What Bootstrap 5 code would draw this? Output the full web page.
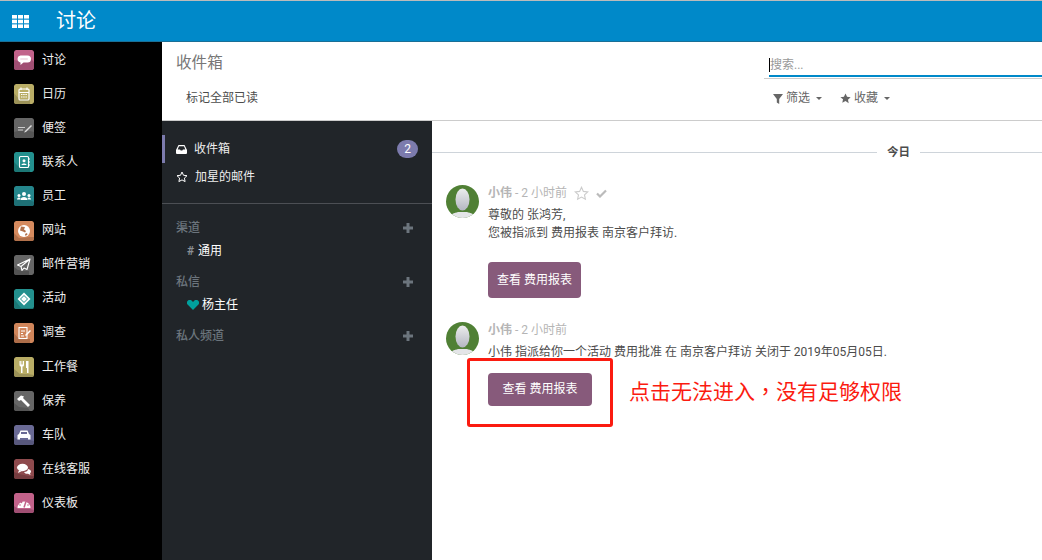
<!DOCTYPE html>
<html lang="zh">
<head>
<meta charset="utf-8">
<title>讨论</title>
<link href="https://cdn.jsdelivr.net/npm/bootstrap@5.3.0/dist/css/bootstrap.min.css" rel="stylesheet">
<style>
html,body{height:100%;overflow:hidden}
body{font-family:Roboto,"Noto Sans CJK SC",sans-serif;font-size:12px;line-height:17px;color:#4c4c4c;background:#fff}
.topbar{height:42px;background:#0089c9;border-top:1px solid #bbb;border-bottom:1px solid #1a6f96}
.grid-btn{width:40px;padding-left:12px;line-height:0}
.app-title{font-size:20px;line-height:40px;margin-left:16px;color:#fff}
.shell{height:518px}
.apps{width:162px;background:#000;padding-top:1px}
.app-row{height:34.12px;padding-left:14px;gap:8px;color:#eee;font-size:12px}
.app-ico{width:20px;height:20px;border-radius:2px;flex:none;line-height:0}
.workspace{min-width:0}
.cp{height:79px;border-bottom:1px solid #ccc;padding-left:15px}
.cp-title{font-size:15.6px;line-height:20px;margin-top:11px;margin-left:-1px;color:#777}
.cp-action{margin:17px 0 0 9px;color:#4c4c4c}
.cp-right{width:278px}
.search-box{margin-top:15px;height:22px;border-bottom:1px solid #ccc;padding-left:5px}
.search-inner{height:20px;border-bottom:2px solid #0089c9;color:#999;line-height:17px;padding-top:0}
.search-cursor{border-left:1px solid #000;padding-left:0;height:14px;display:inline-block;line-height:15px}
.filters{padding:11px 0 0 9px;color:#666;gap:18px}
.filters svg{margin-right:3px}
.caret-s{display:inline-block;border:3.5px solid transparent;border-top-color:#666;border-bottom:0;margin-left:6px;vertical-align:2px}
.side{width:270px;background:#212529;color:#eee;flex:none;padding-top:14px}
.side-item{height:28px;padding:0 14px;position:relative;gap:7px}
.side-item.on{box-shadow:inset 3px 0 0 #7c7bad}
.pill-n{background:#7c7bad;color:#fff;border-radius:9px;width:21px;height:18px;text-align:center;line-height:18px;font-size:12px;margin-left:auto}
.side-div{border-top:1px solid #4c4f54;margin-top:12px;margin-bottom:14px}
.side-h{height:20px;padding:0 14px;color:#6c757d;font-weight:500}
.side-h .plus{margin-left:auto;margin-right:5px;line-height:0}
.side-sub{height:20px;padding-left:25px;color:#fff;margin-top:3px;margin-bottom:11px;gap:3px}
.side-sub i{font-style:normal;color:#8a8f94;font-weight:700;margin-right:1px}
.main{position:relative;min-width:0}
.sep{height:18px;margin-top:22px;margin-bottom:24px;gap:10px;font-weight:700;font-size:11.5px;color:#4c4c4c}
.sep span{flex:none}
.sep b{display:block;height:1px;background:#ced4da}
.sep .l{width:445px}.sep .r{flex:1}
.msg{padding-left:14px;gap:9px}
.ava{width:33px;height:33px;flex:none;line-height:0}
.who{color:#b5b5b5;height:17px;gap:7px;margin-bottom:4px}
.who strong{font-weight:700}
.msg-line{line-height:18px}
.act-btn{background:#875a7b;color:#fff;border-radius:4px;padding:0;border:0;font-size:12px}
.b1{width:93px;height:36px;margin-top:20px}
.b2{width:104px;height:33px;margin-top:12px}
.msg-two{margin-top:24px}
.mark-box{position:absolute;left:35px;top:237px;width:146px;height:69px;border:3px solid #fb1b10;border-radius:3px}
.mark-text{position:absolute;left:197px;top:255px;color:#fb1b10;font-size:21px;line-height:28px;white-space:nowrap;font-family:"Noto Sans CJK SC",sans-serif}
.tc-punct{font-family:"Noto Sans CJK TC",sans-serif}
</style>
</head>
<body>
<div class="topbar d-flex align-items-center">
  <div class="grid-btn"><svg width="17" height="13" viewBox="0 0 17 13" fill="#fff"><rect x="0" y="0" width="5" height="3.6"/><rect x="6" y="0" width="5" height="3.6"/><rect x="12" y="0" width="5" height="3.6"/><rect x="0" y="4.7" width="5" height="3.6"/><rect x="6" y="4.7" width="5" height="3.6"/><rect x="12" y="4.7" width="5" height="3.6"/><rect x="0" y="9.4" width="5" height="3.6"/><rect x="6" y="9.4" width="5" height="3.6"/><rect x="12" y="9.4" width="5" height="3.6"/></svg></div>
  <div class="app-title">讨论</div>
</div>
<div class="shell d-flex">
  <nav class="apps flex-shrink-0" id="apps">
    <div class="app-row d-flex align-items-center"><svg class="app-ico" viewBox="0 0 20 20"><rect width="20" height="20" rx="2" fill="#c2628a"/><path d="M0 20V10l5 1 12-2 3 3v6a2 2 0 0 1-2 2z" fill="#a04f73"/><path d="M6.500 5.500h7a3.500 3.500 0 0 1 0 7H9.500l-3 2.500v-2.600a3.500 3.500 0 0 1 0-6.900z" fill="#fff"/><rect x="6" y="8" width="8" height="2" rx="1" fill="#f2dfe7"/></svg>讨论</div>
    <div class="app-row d-flex align-items-center"><svg class="app-ico" viewBox="0 0 20 20"><rect width="20" height="20" rx="2" fill="#b9ad66"/><path d="M0 20V9l5 6h11v5z" fill="#9c9258"/><rect x="5" y="5" width="10" height="11" rx="1" fill="none" stroke="#fff" stroke-width="1.200"/><path d="M5 8.500h10M7 3.500v2.500M13 3.500v2.500" stroke="#fff" stroke-width="1.200"/><path d="M7 10.500h6M7 13h6" stroke="#fff" stroke-dasharray="1.500 .7"/></svg>日历</div>
    <div class="app-row d-flex align-items-center"><svg class="app-ico" viewBox="0 0 20 20"><rect width="20" height="20" rx="2" fill="#666"/><path d="M0 20v-6l4-1 12 0 4 1v6z" fill="#555"/><path d="M4 9.500h7M4 12h5" stroke="#ccc" stroke-width="1.200"/><path d="M11 13l6-6 1 1-6 6-2 .5z" fill="#ddd"/></svg>便签</div>
    <div class="app-row d-flex align-items-center"><svg class="app-ico" viewBox="0 0 20 20"><rect width="20" height="20" rx="2" fill="#23908e"/><path d="M0 20V10l6 6h10v4z" fill="#1c7775"/><rect x="5.500" y="4.500" width="9" height="11" rx="1" fill="none" stroke="#fff" stroke-width="1.100"/><circle cx="10" cy="8.700" r="1.500" fill="#fff"/><path d="M7.500 13c0-2 5-2 5 0z" fill="#fff"/><path d="M15 7h1M15 10h1M15 13h1" stroke="#fff"/></svg>联系人</div>
    <div class="app-row d-flex align-items-center"><svg class="app-ico" viewBox="0 0 20 20"><rect width="20" height="20" rx="2" fill="#25868c"/><path d="M0 20v-8l4 2 12 0 4 2v4z" fill="#1e7076"/><circle cx="10" cy="8" r="2" fill="#fff"/><circle cx="5" cy="9.500" r="1.500" fill="#fff"/><circle cx="15" cy="9.500" r="1.500" fill="#fff"/><path d="M6.500 14c0-4 7-4 7 0zM3 13.500c0-2.500 3-2.500 3.500-1.500l-.5 1.500zM17 13.500c0-2.500-3-2.500-3.500-1.500l.5 1.500z" fill="#fff"/></svg>员工</div>
    <div class="app-row d-flex align-items-center"><svg class="app-ico" viewBox="0 0 20 20"><rect width="20" height="20" rx="2" fill="#d58a5e"/><path d="M0 20V12l5 5 11-1 4 0v4z" fill="#b2714b"/><circle cx="10" cy="10" r="6" fill="#fff"/><path d="M7 5.500l4 .5-1 2.500 2 1.500-1 1.500-2-1-3-1 .5-2zM11 13l2-1 .5 1.500-2 1.500z" fill="#b2714b"/></svg>网站</div>
    <div class="app-row d-flex align-items-center"><svg class="app-ico" viewBox="0 0 20 20"><rect width="20" height="20" rx="2" fill="#666"/><path d="M0 20v-8l4 3 6 1 5 0 0 4z" fill="#525252"/><path d="M16 4L3.500 10l3.500 1.500 1 4 2-2.500 3 1.500zM7 11.500L16 4" fill="none" stroke="#fff" stroke-width="1.100" stroke-linejoin="round"/></svg>邮件营销</div>
    <div class="app-row d-flex align-items-center"><svg class="app-ico" viewBox="0 0 20 20"><rect width="20" height="20" rx="2" fill="#23908e"/><path d="M0 20V10l7 9h13v1z" fill="#1c7775"/><path d="M10 3.500L16.500 10 10 16.500 3.500 10z" fill="#fff"/><path d="M10 6.500L13.500 10 10 13.500 6.500 10z" fill="none" stroke="#23908e"/></svg>活动</div>
    <div class="app-row d-flex align-items-center"><svg class="app-ico" viewBox="0 0 20 20"><rect width="20" height="20" rx="2" fill="#d0855a"/><path d="M0 20V10l5 6h11v4z" fill="#ad6d49"/><rect x="5" y="4.500" width="8" height="11" fill="none" stroke="#fff" stroke-width="1.100"/><path d="M7 8h4M7 10.500h2M7 13h3" stroke="#fff"/><path d="M11 12l5-5 1 1-5 5z" fill="#fff"/></svg>调查</div>
    <div class="app-row d-flex align-items-center"><svg class="app-ico" viewBox="0 0 20 20"><rect width="20" height="20" rx="2" fill="#b9ad66"/><path d="M0 20V12l6 5 8 0 6 1v2z" fill="#9c9258"/><path d="M5.500 4v4a1.500 1.500 0 0 0 1.500 1.500V16h1.500V9.500A1.500 1.500 0 0 0 10 8V4H9v3.500H8.300V4H7.600v3.500H6.800V4zM12 4h2.500v12H13v-5h-1z" fill="#fff"/></svg>工作餐</div>
    <div class="app-row d-flex align-items-center"><svg class="app-ico" viewBox="0 0 20 20"><rect width="20" height="20" rx="2" fill="#666"/><path d="M0 20V12l5 4 9 1 2 3z" fill="#555"/><path d="M3 8l4-3.500 3 1-1 1.500 7 7-2 2-7-7-2 1z" fill="#fff"/></svg>保养</div>
    <div class="app-row d-flex align-items-center"><svg class="app-ico" viewBox="0 0 20 20"><rect width="20" height="20" rx="2" fill="#6a6a95"/><path d="M0 20v-8l4 3h12l4 1v4z" fill="#58587d"/><path d="M6.500 5.500h7L15 9l1.500 1v4.500H14V13H6v1.500H3.500V10L5 9z" fill="#fff"/><rect x="7" y="7" width="6" height="2" fill="#6a6a95"/></svg>车队</div>
    <div class="app-row d-flex align-items-center"><svg class="app-ico" viewBox="0 0 20 20"><rect width="20" height="20" rx="2" fill="#8e4a4d"/><path d="M0 20v-7l5 2 10 2 5 0v3z" fill="#763c3f"/><ellipse cx="8.500" cy="8.500" rx="5.500" ry="3.700" fill="#fff"/><path d="M5 11l-1 3 4-2zM14 10c2 .5 3 1.500 3 2.500 0 .8-.5 1.500-1 1.800l.5 1.700-2.500-1.200c-2 0-3.500-.5-4-1.800 2.500 0 4-1.300 4-3z" fill="#fff"/></svg>在线客服</div>
    <div class="app-row d-flex align-items-center"><svg class="app-ico" viewBox="0 0 20 20"><rect width="20" height="20" rx="2" fill="#c2628a"/><path d="M0 20v-7l4 3h12l4 1v3z" fill="#a04f73"/><path d="M3.500 15a6.500 6.500 0 1 1 13 0z" fill="#fff"/><path d="M10 14.500l2-6" stroke="#c2628a" stroke-width="1.500"/><circle cx="6" cy="12" r=".8" fill="#c2628a"/><circle cx="7.500" cy="9.500" r=".8" fill="#c2628a"/><circle cx="14" cy="12" r=".8" fill="#c2628a"/></svg>仪表板</div>
  </nav>
  <div class="workspace flex-grow-1 d-flex flex-column">
    <header class="cp d-flex justify-content-between flex-shrink-0">
      <div>
        <div class="cp-title">收件箱</div>
        <div class="cp-action">标记全部已读</div>
      </div>
      <div class="cp-right">
        <div class="search-box"><div class="search-inner"><span class="search-cursor">搜索...</span></div></div>
        <div class="filters d-flex">
          <span class="d-inline-flex align-items-center"><svg width="10" height="10" viewBox="0 0 10 10" fill="#666"><path d="M0 0h10L6.200 5v5L3.800 8.500V5z"/></svg>筛选<i class="caret-s"></i></span>
          <span class="d-inline-flex align-items-center"><svg width="11" height="11" viewBox="0 0 12 12" fill="#666"><path d="M6 .5l1.700 3.600 3.900.5-2.900 2.700.8 3.900L6 8.800 2.500 10.700l.8-3.900L.4 4.600l3.900-.5z"/></svg>收藏<i class="caret-s"></i></span>
        </div>
      </div>
    </header>
    <div class="d-flex flex-grow-1">
      <aside class="side">
        <div class="side-item on d-flex align-items-center"><svg width="11" height="9" viewBox="0 0 11 9" fill="#fff"><path d="M2.500 0h6L11 5v3a1 1 0 0 1-1 1H1a1 1 0 0 1-1-1V5zM3 1.300L1.700 4.500h2.300l.7 1h1.600l.7-1h2.300L8 1.300z"/></svg>收件箱<span class="pill-n">2</span></div>
        <div class="side-item d-flex align-items-center"><svg width="12" height="12" viewBox="0 0 12 12" fill="none" stroke="#fff"><path d="M6 1l1.500 3.300 3.500.4-2.600 2.400.7 3.500L6 8.900l-3.100 1.700.7-3.500L1 4.700l3.500-.4z"/></svg>加星的邮件</div>
        <div class="side-div"></div>
        <div class="side-h d-flex align-items-center">渠道<span class="plus"><svg width="10" height="10" viewBox="0 0 10 10" fill="#6c757d"><path d="M3.500 0h3v3.500H10v3H6.500V10h-3V6.500H0v-3h3.500z"/></svg></span></div>
        <div class="side-sub d-flex align-items-center"><i>#</i>通用</div>
        <div class="side-h d-flex align-items-center">私信<span class="plus"><svg width="10" height="10" viewBox="0 0 10 10" fill="#6c757d"><path d="M3.500 0h3v3.500H10v3H6.500V10h-3V6.500H0v-3h3.500z"/></svg></span></div>
        <div class="side-sub d-flex align-items-center"><svg width="12" height="10" viewBox="0 0 12 10" fill="#00a09d"><path d="M6 10L.8 4.800A2.800 2.800 0 0 1 4.800.8L6 2 7.200.8a2.800 2.800 0 0 1 4 4z"/></svg>杨主任</div>
        <div class="side-h d-flex align-items-center">私人频道<span class="plus"><svg width="10" height="10" viewBox="0 0 10 10" fill="#6c757d"><path d="M3.500 0h3v3.500H10v3H6.500V10h-3V6.500H0v-3h3.500z"/></svg></span></div>
      </aside>
      <main class="main flex-grow-1">
        <div class="sep d-flex align-items-center"><b class="l"></b><span>今日</span><b class="r"></b></div>
        <div class="msg d-flex">
          <svg class="ava" viewBox="0 0 33 33"><defs><clipPath id="c1"><circle cx="16.500" cy="16.500" r="16.500"/></clipPath><linearGradient id="h1" x1="0" y1="0" x2="0" y2="1"><stop offset="0" stop-color="#eceded"/><stop offset="1" stop-color="#b4b6c2"/></linearGradient></defs><g clip-path="url(#c1)"><rect width="33" height="33" fill="#508035"/><path d="M2 33c1-4 7-5 10-6h9c3 1 9 2 10 6z" fill="#e4e5e8"/><ellipse cx="16.500" cy="14.500" rx="7" ry="11" fill="url(#h1)"/></g></svg>
          <div>
            <div class="who d-flex align-items-center"><span><strong>小伟</strong> - 2 小时前</span><svg width="15" height="15" viewBox="0 0 12 12" fill="none" stroke="#ccc" stroke-width=".9"><path d="M6 1l1.500 3.300 3.500.4-2.600 2.400.7 3.500L6 8.900l-3.100 1.700.7-3.500L1 4.700l3.500-.4z"/></svg><svg width="11" height="9" viewBox="0 0 11 9" fill="none" stroke="#bbb" stroke-width="2.200"><path d="M1 4.500l3 3 6-6"/></svg></div>
            <div class="msg-line">尊敬的 张鸿芳,</div>
            <div class="msg-line">您被指派到 费用报表 南京客户拜访.</div>
            <button class="act-btn b1 d-block" type="button">查看 费用报表</button>
          </div>
        </div>
        <div class="msg msg-two d-flex">
          <svg class="ava" viewBox="0 0 33 33"><defs><clipPath id="c2"><circle cx="16.500" cy="16.500" r="16.500"/></clipPath><linearGradient id="h2" x1="0" y1="0" x2="0" y2="1"><stop offset="0" stop-color="#eceded"/><stop offset="1" stop-color="#b4b6c2"/></linearGradient></defs><g clip-path="url(#c2)"><rect width="33" height="33" fill="#508035"/><path d="M2 33c1-4 7-5 10-6h9c3 1 9 2 10 6z" fill="#e4e5e8"/><ellipse cx="16.500" cy="14.500" rx="7" ry="11" fill="url(#h2)"/></g></svg>
          <div>
            <div class="who"><strong>小伟</strong> - 2 小时前</div>
            <div class="msg-line">小伟 指派给你一个活动 费用批准 在 南京客户拜访 关闭于 2019年05月05日.</div>
            <button class="act-btn b2 d-block" type="button">查看 费用报表</button>
          </div>
        </div>
        <div class="mark-box"></div>
        <div class="mark-text">点击无法进入<span class="tc-punct" lang="zh-Hant">，</span>没有足够权限</div>
      </main>
    </div>
  </div>
</div>
<script src="https://cdn.jsdelivr.net/npm/bootstrap@5.3.0/dist/js/bootstrap.bundle.min.js"></script>
</body>
</html>
